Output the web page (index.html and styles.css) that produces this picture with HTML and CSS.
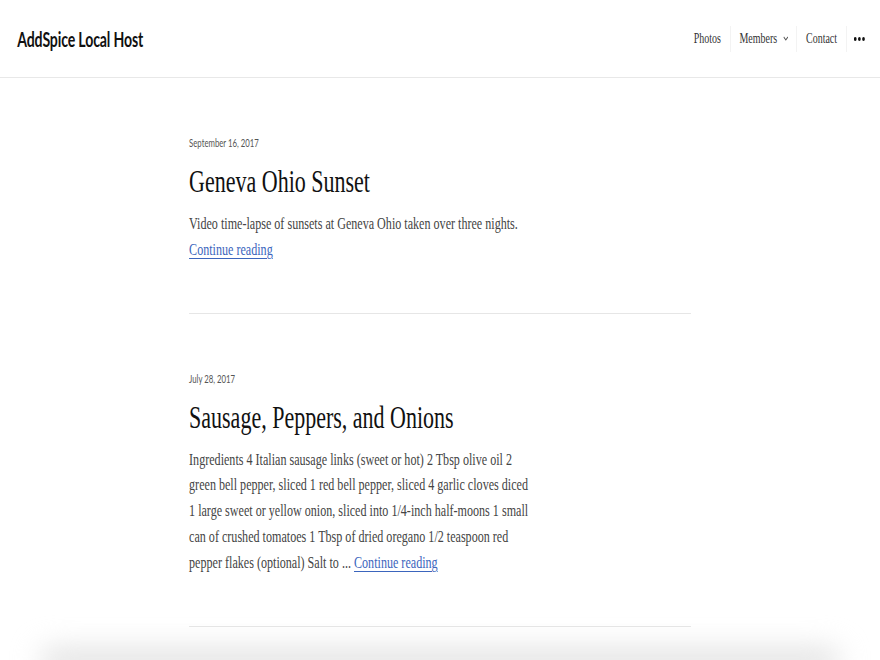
FILE: index.html
```html
<!DOCTYPE html>
<html lang="en">
<head>
<meta charset="utf-8">
<title>AddSpice Local Host</title>
<link rel="stylesheet" href="styles.css">
</head>
<body>
<div class="page">
  <header class="site-header">
    <a class="site-title" href="#">AddSpice Local Host</a>
    <nav class="main-nav">
      <a class="nav-item" href="#">Photos</a>
      <a class="nav-item has-sub" href="#">Members
        <svg class="chev" width="8" height="5" viewBox="0 0 8 5"><path d="M1 1l3 3 3-3" fill="none" stroke="#555" stroke-width="1.1"/></svg>
      </a>
      <a class="nav-item" href="#">Contact</a>
      <a class="nav-item more" href="#" aria-label="More">
        <svg width="16" height="4" viewBox="0 0 16 4"><circle cx="2" cy="2" r="2" fill="#111"/><circle cx="8" cy="2" r="2" fill="#111"/><circle cx="14" cy="2" r="2" fill="#111"/></svg>
      </a>
    </nav>
  </header>
  <main class="content">
    <article class="post">
      <div class="post-date">September 16, 2017</div>
      <h2 class="post-title">Geneva Ohio Sunset</h2>
      <p class="post-excerpt">Video time-lapse of sunsets at Geneva Ohio taken over three nights.<br><a class="more-link" href="#">Continue reading</a></p>
    </article>
    <article class="post">
      <div class="post-date">July 28, 2017</div>
      <h2 class="post-title">Sausage, Peppers, and Onions</h2>
      <p class="post-excerpt">Ingredients 4 Italian sausage links (sweet or hot) 2 Tbsp olive oil 2 green bell pepper, sliced 1 red bell pepper, sliced 4 garlic cloves diced 1 large sweet or yellow onion, sliced into 1/4-inch half-moons 1 small can of crushed tomatoes 1 Tbsp of dried oregano 1/2 teaspoon red pepper flakes (optional) Salt to ... <a class="more-link" href="#">Continue reading</a></p>
    </article>
  </main>
</div>
<div class="window-shadow"></div>
</body>
</html>
```

FILE: styles.css
```css
html, body {
  margin: 0;
  padding: 0;
  overflow: hidden;
  background: #fff;
}

.page {
  width: 1280px;
  transform: scaleX(0.6875);
  transform-origin: 0 0;
}

.site-header {
  height: 77px;
  display: flex;
  align-items: center;
  justify-content: space-between;
  padding: 0 22px 0 25px;
  border-bottom: 1px solid #e8e8e8;
}

.site-title {
  font-family: Lato, "Liberation Sans", sans-serif;
  font-weight: 700;
  font-size: 20.5px;
  color: #111;
  text-decoration: none;
  letter-spacing: -0.2px;
}

.main-nav {
  display: flex;
  align-items: center;
}

.nav-item {
  display: flex;
  align-items: center;
  height: 26px;
  padding: 0 13px;
  font-family: "Liberation Serif", serif;
  font-size: 14.5px;
  color: #333;
  text-decoration: none;
}

.nav-item + .nav-item {
  border-left: 1px solid #eee;
}

.nav-item:first-child {
  padding-left: 0;
}

.chev {
  margin-left: 9px;
}

.nav-item.has-sub {
  padding-right: 11px;
}

.nav-item.more {
  padding-left: 10.5px;
  padding-right: 0;
}

.content {
  width: 730px;
  margin: 0 auto;
}

.post {
  padding: 57px 0 50px;
  border-bottom: 1px solid #e6e6e6;
}

.post-date {
  font-family: Lato, "Liberation Sans", sans-serif;
  font-size: 11.3px;
  line-height: 16px;
  color: #555;
}

.post-title {
  margin: 10px 0 0;
  font-family: "Liberation Serif", serif;
  font-weight: 400;
  font-size: 32px;
  line-height: 40px;
  color: #111;
}

.post-excerpt {
  margin: 10px 0 0;
  max-width: 500px;
  font-family: "Liberation Serif", serif;
  font-size: 17.6px;
  line-height: 25.8px;
  color: #444;
}

.more-link {
  color: #3b65bd;
  text-decoration: underline;
  text-underline-offset: 3px;
  text-decoration-thickness: 1px;
}

.window-shadow {
  position: fixed;
  left: 40px;
  right: 40px;
  bottom: -14px;
  height: 26px;
  border-radius: 20px;
  background: #e2e2e2;
  filter: blur(14px);
}
```
